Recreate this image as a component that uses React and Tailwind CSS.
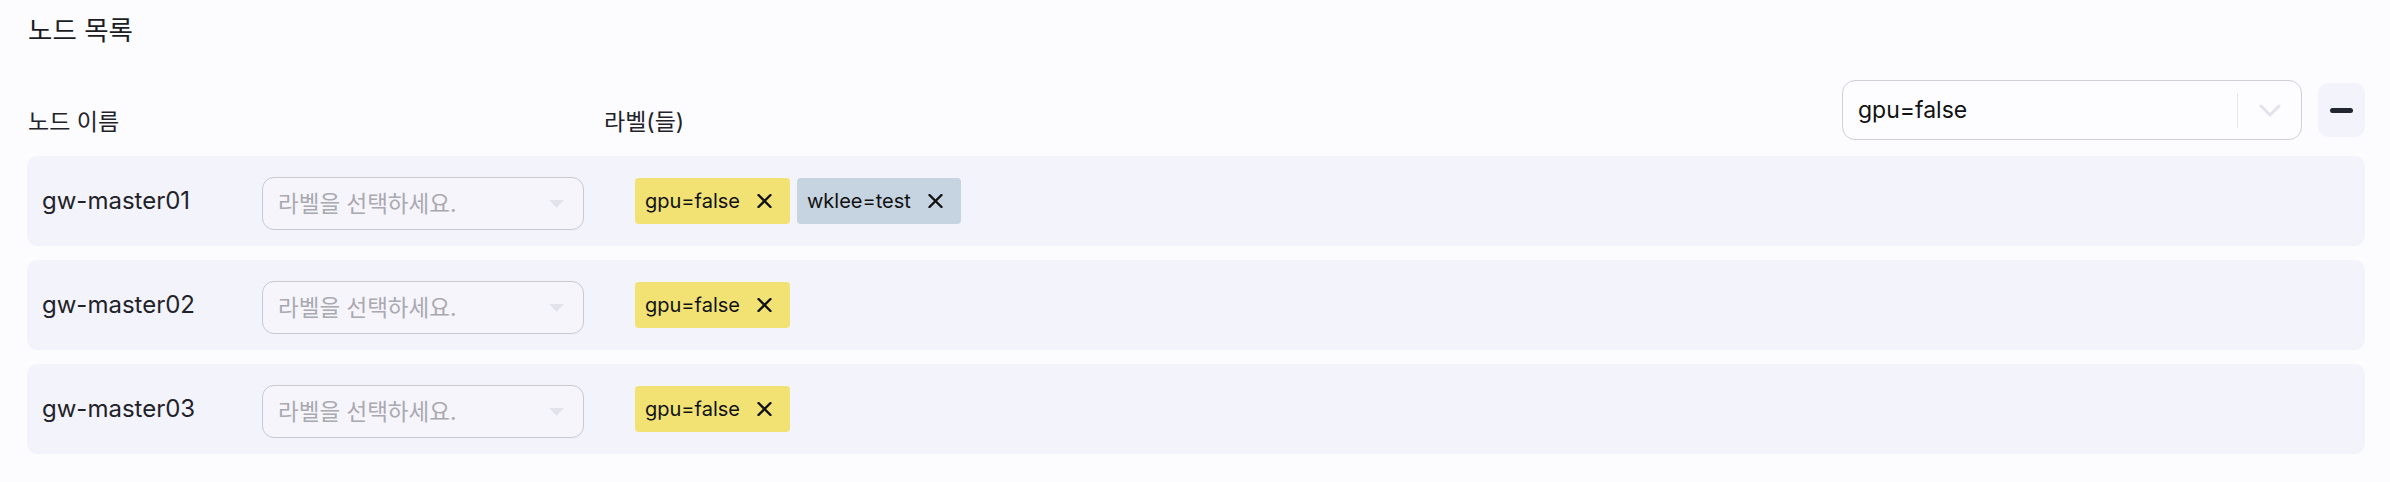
const NODES = [
  { name: 'gw-master01', labels: ['gpu=false', 'wklee=test'] },
  { name: 'gw-master02', labels: ['gpu=false'] },
  { name: 'gw-master03', labels: ['gpu=false'] },
]

const TAG_COLORS = {
  'gpu=false': 'bg-[#f2e274]',
  'wklee=test': 'bg-[#c6d3e0]',
}

function CloseIcon() {
  return (
    <svg width="15" height="14" viewBox="0 0 15 14" className="shrink-0">
      <path d="M1.5 1L13.5 13M13.5 1L1.5 13" stroke="#111" strokeWidth="2.4" strokeLinecap="round" />
    </svg>
  )
}

function LabelTag({ label }) {
  return (
    <span className={`flex items-center h-[46px] pl-[10px] pr-[18px] rounded-[4px] text-[20px] text-[#111] ${TAG_COLORS[label]}`}>
      <span>{label}</span>
      <span className="ml-[17px] flex items-center"><CloseIcon /></span>
    </span>
  )
}

function NodeRow({ node }) {
  return (
    <div className="flex items-center h-[90px] pl-[15px] rounded-[10px] bg-[#f3f3fb]">
      <div className="w-[220px] text-[24px] text-[#1f2229]">{node.name}</div>
      <div className="flex items-center justify-between w-[322px] h-[53px] pl-[15px] pr-[19px] rounded-[12px] border border-[#c9c9d1] bg-[#f5f5fb] mt-[5px]">
        <span className="text-[22.5px] text-[#a9a9b0]">라벨을 선택하세요.</span>
        <svg width="15" height="8" viewBox="0 0 15 8">
          <path d="M0 0H15L7.5 8Z" fill="#e3e3ec" />
        </svg>
      </div>
      <div className="flex items-center gap-[7px] ml-[51px]">
        {node.labels.map((l) => <LabelTag key={l} label={l} />)}
      </div>
    </div>
  )
}

export default function App() {
  return (
    <div
      className="w-[2390px] h-[482px] bg-[#fcfcff] pl-[27px] pr-[25px] flex flex-col"
      style={{ fontFamily: 'Inter, "Noto Sans CJK KR", sans-serif' }}
    >
      <div className="h-[80px] pt-[14px]">
        <h2 className="pl-[1px] text-[26.5px] leading-[32px] font-normal text-[#1a1d24]">노드 목록</h2>
      </div>

      <div className="flex items-center justify-between h-[60px]">
        <div className="flex self-end mb-[4px] text-[23px] leading-[27px] text-[#1f2229]">
          <span className="w-[577px] pl-[1px]">노드 이름</span>
          <span>라벨(들)</span>
        </div>
        <div className="flex items-center">
          <div className="flex items-center w-[460px] h-[60px] rounded-[13px] border border-[#d0d0d6] bg-[#fdfdff]">
            <span className="flex-1 pl-[15px] text-[23px] text-[#111]">gpu=false</span>
            <span className="w-px h-[35px] bg-[#e6e6ee]" />
            <span className="flex items-center justify-center w-[63px]">
              <svg width="22" height="13" viewBox="0 0 22 13">
                <path d="M2 2L11 11L20 2" fill="none" stroke="#e3e3ee" strokeWidth="3" strokeLinecap="round" strokeLinejoin="round" />
              </svg>
            </span>
          </div>
          <button className="ml-[16px] flex items-center justify-center w-[47px] h-[54px] rounded-[10px] bg-[#f3f3fb]">
            <span className="block w-[23px] h-[5px] rounded-full bg-[#22272f]" />
          </button>
        </div>
      </div>

      <div className="flex flex-col gap-[14px] mt-[16px]">
        {NODES.map((n) => <NodeRow key={n.name} node={n} />)}
      </div>
    </div>
  )
}
